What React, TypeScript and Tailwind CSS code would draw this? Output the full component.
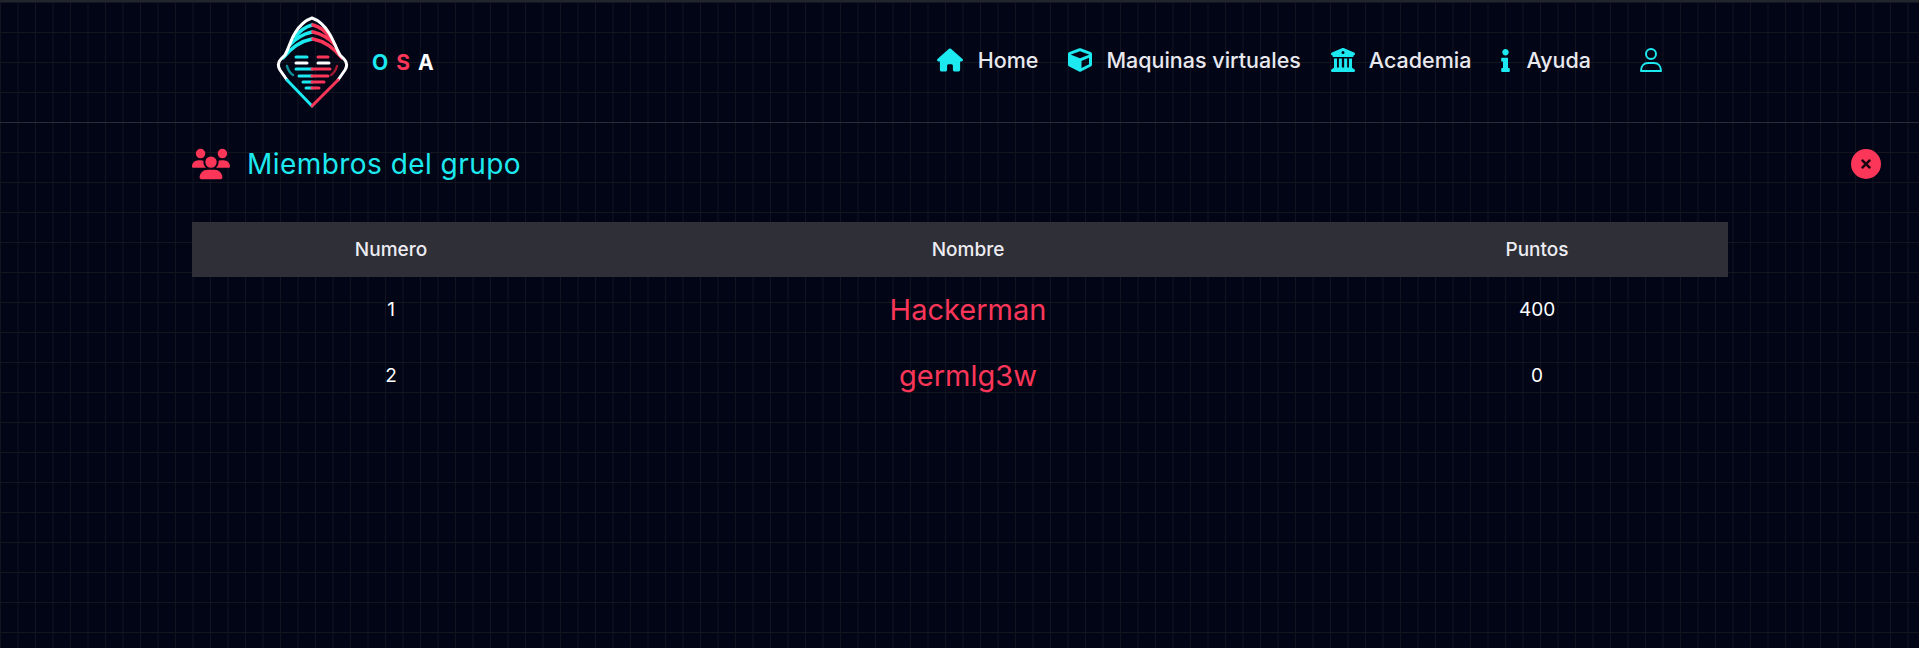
import { FaCube, FaInfo, FaTimes } from "react-icons/fa"
import { FaBuildingColumns, FaHouse, FaUsers } from "react-icons/fa6"

const font = { fontFamily: 'Inter, "Liberation Sans", sans-serif' }

function Logo() {
  return (
    <svg viewBox="0 0 75 95" className="h-[95px] w-[75px] shrink-0" fill="none" strokeLinecap="round" strokeLinejoin="round">
      {/* hood layers */}
      <path d="M37 10 C29 12 24 17 20 22" stroke="#1de9f0" strokeWidth="3.5" />
      <path d="M37 17 C28 19 20 24 15 30" stroke="#1de9f0" strokeWidth="3.5" />
      <path d="M37 24 C26 26 16 33 8 43" stroke="#1de9f0" strokeWidth="3.5" />
      <path d="M38 10 C46 12 51 17 55 22" stroke="#fb3658" strokeWidth="3.5" />
      <path d="M38 17 C47 19 55 24 60 30" stroke="#fb3658" strokeWidth="3.5" />
      <path d="M38 24 C49 26 59 33 67 43" stroke="#fb3658" strokeWidth="3.5" />
      {/* outer outline */}
      <path d="M12 65 L5 55 C2 50 3 47 6 44 L10 40 C14 33 16 24 20 18 C25 10 31 5 37 3 C43 5 49 10 54 18 C58 24 61 33 65 40 L69 44 C72 47 73 50 70 55 L63 65" stroke="#ffffff" strokeWidth="3" />
      <path d="M12 65 L37 91" stroke="#1de9f0" strokeWidth="3" />
      <path d="M63 65 L37 91" stroke="#fb3658" strokeWidth="3" />
      {/* face bars */}
      <path d="M21 42 H32" stroke="#1de9f0" strokeWidth="3" />
      <path d="M43 42 H53" stroke="#fb3658" strokeWidth="3" />
      <path d="M21 48 H32" stroke="#ffffff" strokeWidth="3" />
      <path d="M43 48 H54" stroke="#ffffff" strokeWidth="3" />
      <path d="M21 54 H37" stroke="#1de9f0" strokeWidth="3" />
      <path d="M37 54 H55" stroke="#fb3658" strokeWidth="3" />
      <path d="M24 61 H37" stroke="#1de9f0" strokeWidth="3" />
      <path d="M37 61 H53" stroke="#fb3658" strokeWidth="3" />
      <path d="M28 67 H37" stroke="#1de9f0" strokeWidth="3" />
      <path d="M37 67 H49" stroke="#fb3658" strokeWidth="3" />
      <path d="M31 73 H37" stroke="#1de9f0" strokeWidth="3" />
      <path d="M37 73 H44" stroke="#fb3658" strokeWidth="3" />
      {/* cheeks */}
      <path d="M12 51 C13 55 15 58 18 60" stroke="#0c8f97" strokeWidth="2.5" />
      <path d="M62 51 C61 55 59 58 56 60" stroke="#a01730" strokeWidth="2.5" />
    </svg>
  )
}

function NavItem({ icon, label, gap }: { icon: React.ReactNode; label: string; gap: string }) {
  return (
    <a className={`flex items-center ${gap} text-[21.5px] font-medium text-[#e8e8ee]`}>
      {icon}
      <span>{label}</span>
    </a>
  )
}

export default function App() {
  return (
    <div
      style={font}
      className="min-h-[648px] bg-[#010516] bg-[linear-gradient(to_right,#11141f_1px,transparent_1px),linear-gradient(to_bottom,#13161f_1px,transparent_1px)] bg-size-[17.5px_30px] bg-position-[0_2px]"
    >
      <header className="h-[123px] border-t-2 border-b border-t-[#22252e] border-b-[#2a2d38] pl-[275px] pt-[13px]">
        <div className="flex items-center">
          <Logo />
          <div className="ml-[22px] flex gap-[8px] text-[21px] font-bold leading-none">
            <span className="text-[#1de9f0]">O</span>
            <span className="text-[#fb3658]">S</span>
            <span className="text-white">A</span>
          </div>
          <nav className="-mt-[5px] ml-[503px] flex items-center">
            <NavItem gap="gap-[15px]" label="Home" icon={<FaHouse size={26} className="text-[#1de9f0]" />} />
            <div className="ml-[30px]">
              <NavItem gap="gap-[14px]" label="Maquinas virtuales" icon={<FaCube size={24} className="text-[#1de9f0]" />} />
            </div>
            <div className="ml-[30px]">
              <NavItem gap="gap-[14px]" label="Academia" icon={<FaBuildingColumns size={24} className="text-[#1de9f0]" />} />
            </div>
            <div className="ml-[30px]">
              <NavItem gap="gap-[16px]" label="Ayuda" icon={<FaInfo size={23} className="w-[9px] text-[#1de9f0]" />} />
            </div>
            <svg viewBox="0 0 24 26" className="ml-[48px] h-[26px] w-[24px]" fill="none" stroke="#1de9f0" strokeWidth="2">
              <circle cx="12" cy="7" r="5" />
              <path d="M2 24 C2 19 5 16 9 16 H15 C19 16 22 19 22 24 Z" strokeLinejoin="round" />
            </svg>
          </nav>
        </div>
      </header>

      <main className="relative pl-[192px]">
        <div className="flex h-[68px] items-center gap-[17px] pt-[14px]">
          <FaUsers size={38} className="text-[#fb3658]" />
          <h1 className="text-[28px] font-normal tracking-[0.45px] text-[#1de9f0]">Miembros del grupo</h1>
        </div>
        <button className="absolute right-[38px] top-[26px] flex h-[30px] w-[30px] items-center justify-center rounded-full bg-[#fb3658] text-[#1a0610]">
          <FaTimes size={14} />
        </button>

        <table className="mt-[31px] w-[1536px] table-fixed border-collapse text-center text-white">
          <colgroup>
            <col className="w-[398px]" />
            <col className="w-[756px]" />
            <col className="w-[382px]" />
          </colgroup>
          <thead>
            <tr className="h-[55px] bg-[#2f2f37] text-[19px] text-[#ececf2]">
              <th className="pt-[2px] font-medium">Numero</th>
              <th className="pt-[2px] font-medium">Nombre</th>
              <th className="pt-[2px] font-medium">Puntos</th>
            </tr>
          </thead>
          <tbody className="text-[19px]">
            <tr className="h-[66px]">
              <td>1</td>
              <td className="text-[29px] text-[#fb3658]">Hackerman</td>
              <td>400</td>
            </tr>
            <tr className="h-[66px]">
              <td>2</td>
              <td className="text-[29px] text-[#fb3658]">germlg3w</td>
              <td>0</td>
            </tr>
          </tbody>
        </table>
      </main>
    </div>
  )
}
